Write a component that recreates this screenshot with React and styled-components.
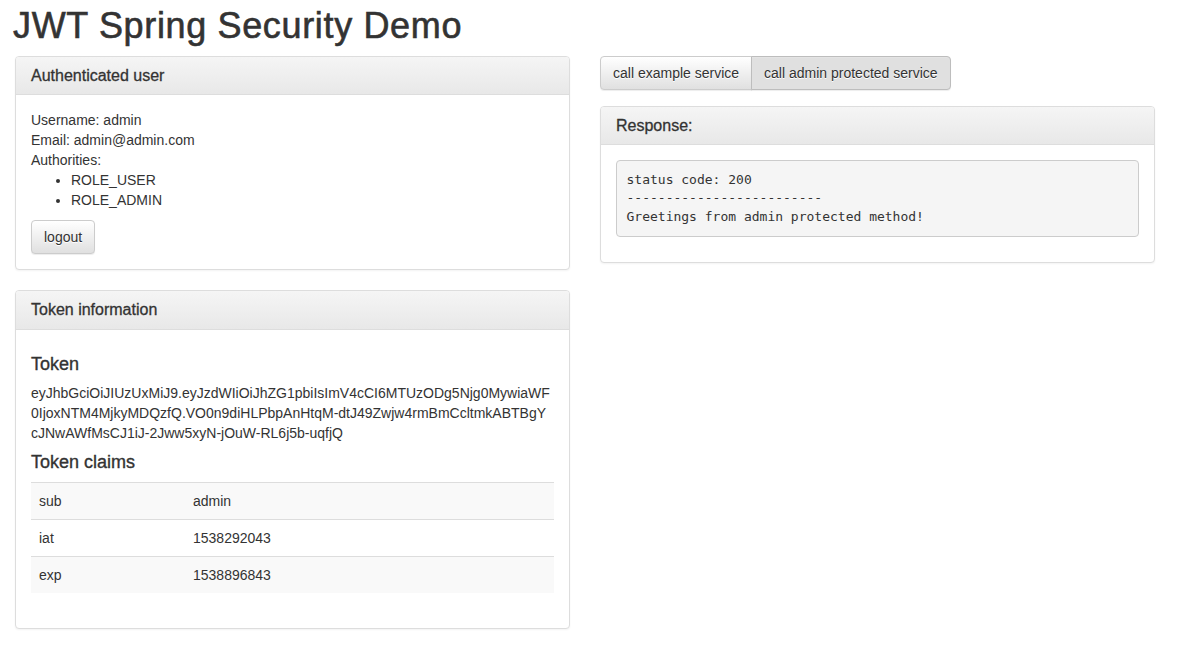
import React from 'react';
import styled, { createGlobalStyle } from 'styled-components';

const GlobalStyle = createGlobalStyle`
  html, body {
    margin: 0;
    padding: 0;
    background: #fff;
  }
  body {
    font-family: "Liberation Sans", Arial, Helvetica, sans-serif;
    font-size: 14px;
    line-height: 1.42857143;
    color: #333;
  }
  * {
    box-sizing: border-box;
  }
`;

const Page = styled.div`
  width: 1170px;
  padding: 6px 15px 0;
`;

const Title = styled.h1`
  margin: 0 0 10px -2px;
  font-size: 36px;
  font-weight: 400;
  line-height: 1.1;
  letter-spacing: 0.65px;
  -webkit-text-stroke: 0.6px #333;
  color: #333;
`;

const Row = styled.div`
  display: grid;
  grid-template-columns: 1fr 1fr;
  column-gap: 30px;
  align-items: start;
`;

const Column = styled.div`
  display: flex;
  flex-direction: column;
`;

const Panel = styled.section`
  margin-bottom: 20px;
  background: #fff;
  border: 1px solid #ddd;
  border-radius: 4px;
  box-shadow: 0 1px 2px rgba(0, 0, 0, 0.05);
`;

const PanelHeading = styled.div`
  padding: 10px 15px;
  border-bottom: 1px solid #ddd;
  border-radius: 3px 3px 0 0;
  background-image: linear-gradient(to bottom, #f5f5f5 0, #e8e8e8 100%);
`;

const PanelTitle = styled.h3`
  margin: 0;
  font-size: 16px;
  font-weight: 400;
  line-height: 1.1;
  -webkit-text-stroke: 0.3px #333;
  color: #333;
`;

const PanelBody = styled.div`
  padding: 15px;
`;

const Line = styled.div``;

const RoleList = styled.ul`
  margin: 0 0 10px;
  padding-left: 40px;
`;

const Button = styled.button`
  display: inline-block;
  margin: 0;
  padding: 6px 12px;
  font-family: inherit;
  font-size: 14px;
  line-height: 1.42857143;
  color: #333;
  text-shadow: 0 1px 0 #fff;
  border: 1px solid ${p => (p.$active ? '#bdbdbd' : '#ccc')};
  border-radius: 4px;
  background-color: ${p => (p.$active ? '#e0e0e0' : '#fff')};
  background-image: ${p =>
    p.$active ? 'none' : 'linear-gradient(to bottom, #fff 0, #e0e0e0 100%)'};
  box-shadow: inset 0 1px 0 rgba(255, 255, 255, 0.15), 0 1px 1px rgba(0, 0, 0, 0.075);
  cursor: pointer;
`;

const ButtonGroup = styled.div`
  display: flex;
  margin-bottom: 16px;

  ${Button} + ${Button} {
    margin-left: -1px;
  }
  ${Button}:first-child {
    border-top-right-radius: 0;
    border-bottom-right-radius: 0;
  }
  ${Button}:last-child {
    border-top-left-radius: 0;
    border-bottom-left-radius: 0;
  }
`;

const Pre = styled.pre`
  margin: 0 0 10px;
  padding: 9.5px;
  font-family: "DejaVu Sans Mono", Menlo, monospace;
  font-size: 13px;
  line-height: 1.42857143;
  color: #333;
  background: #f5f5f5;
  border: 1px solid #ccc;
  border-radius: 4px;
  white-space: pre-wrap;
`;

const SubTitle = styled.h4`
  margin: 10px 0 ${p => (p.$tight ? '8px' : '10px')};
  font-size: 18px;
  font-weight: 400;
  line-height: 1.1;
  -webkit-text-stroke: 0.35px #333;
  color: #333;
`;

const TokenText = styled.div`
  word-break: break-all;
`;

const TokenLine = styled.span`
  display: block;
`;

const Table = styled.table`
  width: 100%;
  margin-bottom: 20px;
  border-collapse: collapse;
  border-spacing: 0;
`;

const Tr = styled.tr`
  background: ${p => (p.$odd ? '#f9f9f9' : 'transparent')};
`;

const Td = styled.td`
  padding: 8px;
  line-height: 1.42857143;
  vertical-align: top;
  border-top: 1px solid #ddd;
  width: ${p => p.$w || 'auto'};
`;

// the token as it wraps in the panel
const tokenLines = [
  'eyJhbGciOiJIUzUxMiJ9.eyJzdWIiOiJhZG1pbiIsImV4cCI6MTUzODg5Njg0MywiaWF',
  '0IjoxNTM4MjkyMDQzfQ.VO0n9diHLPbpAnHtqM-dtJ49Zwjw4rmBmCcltmkABTBgY',
  'cJNwAWfMsCJ1iJ-2Jww5xyN-jOuW-RL6j5b-uqfjQ',
];

const claims = [
  ['sub', 'admin'],
  ['iat', '1538292043'],
  ['exp', '1538896843'],
];

const response = `status code: 200
${'-'.repeat(25)}
Greetings from admin protected method!`;

const App = () => (
  <Page>
    <GlobalStyle />
    <Title>JWT Spring Security Demo</Title>
    <Row>
      <Column>
        <Panel>
          <PanelHeading>
            <PanelTitle>Authenticated user</PanelTitle>
          </PanelHeading>
          <PanelBody>
            <Line>Username: admin</Line>
            <Line>Email: admin@admin.com</Line>
            <Line>Authorities:</Line>
            <RoleList>
              <li>ROLE_USER</li>
              <li>ROLE_ADMIN</li>
            </RoleList>
            <Button>logout</Button>
          </PanelBody>
        </Panel>

        <Panel>
          <PanelHeading>
            <PanelTitle>Token information</PanelTitle>
          </PanelHeading>
          <PanelBody>
            <SubTitle $tight>Token</SubTitle>
            <TokenText>
              {tokenLines.map(line => (
                <TokenLine key={line}>{line}</TokenLine>
              ))}
            </TokenText>
            <SubTitle>Token claims</SubTitle>
            <Table>
              <tbody>
                {claims.map(([key, value], index) => (
                  <Tr key={key} $odd={index % 2 === 0}>
                    <Td $w="154px">{key}</Td>
                    <Td>{value}</Td>
                  </Tr>
                ))}
              </tbody>
            </Table>
          </PanelBody>
        </Panel>
      </Column>

      <Column>
        <ButtonGroup>
          <Button>call example service</Button>
          <Button $active>call admin protected service</Button>
        </ButtonGroup>
        <Panel>
          <PanelHeading>
            <PanelTitle>Response:</PanelTitle>
          </PanelHeading>
          <PanelBody>
            <Pre>{response}</Pre>
          </PanelBody>
        </Panel>
      </Column>
    </Row>
  </Page>
);

export default App;
